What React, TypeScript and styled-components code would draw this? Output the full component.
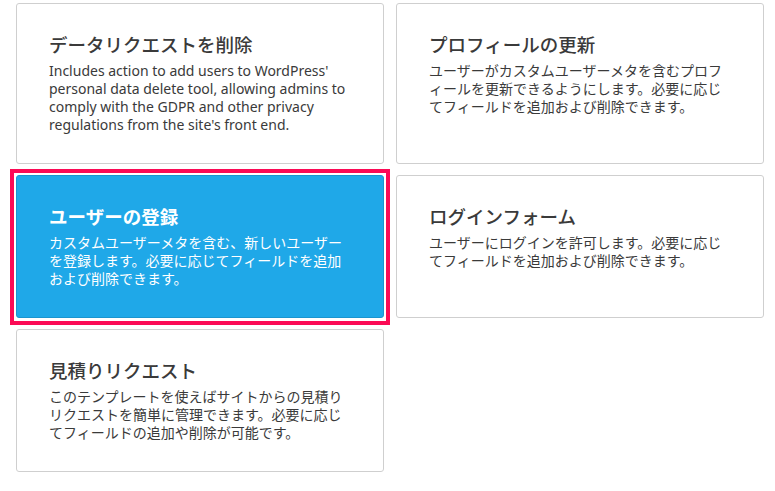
import React, { FunctionComponent } from 'react';
import styled, { createGlobalStyle, css } from 'styled-components';

const GlobalStyle = createGlobalStyle`
  html, body {
    margin: 0;
    padding: 0;
    background: #fff;
  }

  body {
    font-family: "Noto Sans", "Noto Sans CJK JP", sans-serif;
    color: #3a3a3a;
  }
`;

const Grid = styled.div`
  display: grid;
  grid-template-columns: 368px 368px;
  column-gap: 12px;
  row-gap: 11px;
  padding: 3px 0 0 16px;
`;

const Card = styled.div<{ $selected?: boolean }>`
  position: relative;
  box-sizing: border-box;
  border: 1px solid ${p => (p.$selected ? '#1a95cf' : '#cfcfcf')};
  border-radius: 3px;
  background: ${p => (p.$selected ? '#1fa8e8' : '#fff')};
  color: ${p => (p.$selected ? '#fff' : '#3a3a3a')};
  padding: 28px 32px 29px;
  cursor: pointer;

  ${p =>
    p.$selected &&
    css`
      &::after {
        content: "";
        position: absolute;
        top: -7px;
        left: -7px;
        right: -7px;
        bottom: -8px;
        border: 4px solid #fb0a55;
        pointer-events: none;
      }
    `}
`;

const Title = styled.h3<{ $selected?: boolean }>`
  margin: 0 0 4px;
  font-size: 18.5px;
  line-height: 26px;
  font-weight: ${p => (p.$selected ? 700 : 500)};
`;

const Description = styled.p`
  margin: 0;
  font-size: 14px;
  line-height: 18px;
`;

interface Template {
  title: string;
  description: string;
}

const templates: Template[] = [
  {
    title: 'データリクエストを削除',
    description:
      "Includes action to add users to WordPress' personal data delete tool, allowing admins to comply with the GDPR and other privacy regulations from the site's front end.",
  },
  {
    title: 'プロフィールの更新',
    description:
      'ユーザーがカスタムユーザーメタを含むプロフィールを更新できるようにします。必要に応じてフィールドを追加および削除できます。',
  },
  {
    title: 'ユーザーの登録',
    description:
      'カスタムユーザーメタを含む、新しいユーザーを登録します。必要に応じてフィールドを追加および削除できます。',
  },
  {
    title: 'ログインフォーム',
    description: 'ユーザーにログインを許可します。必要に応じてフィールドを追加および削除できます。',
  },
  {
    title: '見積りリクエスト',
    description:
      'このテンプレートを使えばサイトからの見積りリクエストを簡単に管理できます。必要に応じてフィールドの追加や削除が可能です。',
  },
];

const App: FunctionComponent = () => {
  const selected = 2;
  return (
    <>
      <GlobalStyle />
      <Grid>
        {templates.map((t, i) => (
          <Card key={t.title} $selected={i === selected}>
            <Title $selected={i === selected}>{t.title}</Title>
            <Description>{t.description}</Description>
          </Card>
        ))}
      </Grid>
    </>
  );
};

export default App;
